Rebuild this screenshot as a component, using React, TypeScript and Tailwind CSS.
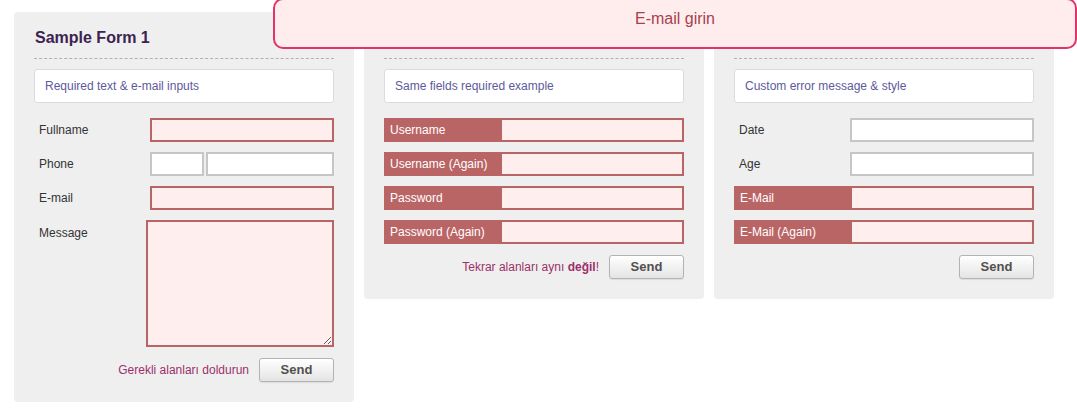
import { ReactNode } from "react";

const font = "font-['Liberation_Sans',Arial,sans-serif]";

const SendButton = () => (
  <button className="w-[75px] h-[24px] rounded-[3px] border border-[#b3b3b3] bg-gradient-to-b from-[#ffffff] to-[#e4e4e4] text-[13px] font-bold text-[#505050] shadow-[0_1px_1px_rgba(0,0,0,0.08)]">
    Send
  </button>
);

const Card = ({ title, info, children }: { title: string; info: string; children: ReactNode }) => (
  <div className="w-[340px] bg-[#efefef] rounded-[4px] px-5 pt-4 pb-5">
    <div className="text-[16px] leading-[20px] font-bold text-[#3c2352] pl-[1px] pb-[10px] border-b border-dashed border-[#b0b0b0]">
      {title}
    </div>
    <div className="mt-[10px] h-[34px] bg-white border border-[#dcdcdc] rounded-[3px] flex items-center pl-[10px] text-[12px] text-[#5d5a9c]">
      {info}
    </div>
    <div className="mt-[15px] flex flex-col gap-[10px]">{children}</div>
  </div>
);

const PinkRow = ({ label }: { label: string }) => (
  <div className="flex items-center">
    <div className="w-[116px] shrink-0 pl-[5px] text-[12px] text-[#333]">{label}</div>
    <input className="w-[184px] h-[24px] border-2 border-[#ba6565] bg-[#ffeeee] outline-none" />
  </div>
);

const GreyRow = ({ label }: { label: string }) => (
  <div className="flex items-center">
    <div className="w-[116px] shrink-0 pl-[5px] text-[12px] text-[#333]">{label}</div>
    <input className="w-[184px] h-[24px] border-2 border-[#c6c6c6] bg-white outline-none" />
  </div>
);

const BarRow = ({ label }: { label: string }) => (
  <div className="flex h-[24px] border-2 border-[#ba6565]">
    <div className="w-[116px] shrink-0 bg-[#ba6565] flex items-center pl-[4px] text-[12px] text-white whitespace-nowrap">
      {label}
    </div>
    <input className="flex-1 min-w-0 bg-[#ffeeee] outline-none" />
  </div>
);

export default function App() {
  return (
    <div className={`${font} relative w-[1077px] h-[412px] bg-white overflow-hidden`}>
      <div className="flex items-start gap-[10px] pl-[14px] pt-[12px]">
        <Card title="Sample Form 1" info="Required text & e-mail inputs">
          <PinkRow label="Fullname" />
          <div className="flex items-center">
            <div className="w-[116px] shrink-0 pl-[5px] text-[12px] text-[#333]">Phone</div>
            <div className="flex gap-[2px]">
              <input className="w-[54px] h-[24px] border-2 border-[#c6c6c6] bg-white outline-none" />
              <input className="w-[128px] h-[24px] border-2 border-[#c6c6c6] bg-white outline-none" />
            </div>
          </div>
          <PinkRow label="E-mail" />
          <div className="flex items-start">
            <div className="w-[112px] shrink-0 pl-[5px] pt-[4px] text-[12px] text-[#333]">Message</div>
            <textarea className="w-[188px] h-[127px] border-2 border-[#ba6565] bg-[#ffeeee] outline-none" />
          </div>
          <div className="flex items-center justify-end gap-[10px] mt-[1px]">
            <span className="text-[12px] text-[#9c2f6a]">Gerekli alanları doldurun</span>
            <SendButton />
          </div>
        </Card>

        <Card title="Sample Form 2" info="Same fields required example">
          <BarRow label="Username" />
          <BarRow label="Username (Again)" />
          <BarRow label="Password" />
          <BarRow label="Password (Again)" />
          <div className="flex items-center justify-end gap-[10px] mt-[1px]">
            <span className="text-[12px] text-[#9c2f6a]">
              Tekrar alanları aynı <b>değil</b>!
            </span>
            <SendButton />
          </div>
        </Card>

        <Card title="Sample Form 3" info="Custom error message & style">
          <GreyRow label="Date" />
          <GreyRow label="Age" />
          <BarRow label="E-Mail" />
          <BarRow label="E-Mail (Again)" />
          <div className="flex items-center justify-end mt-[1px]">
            <SendButton />
          </div>
        </Card>
      </div>

      <div className="absolute left-[273px] top-[-2px] w-[804px] h-[51px] border-2 border-[#df336a] rounded-[10px] bg-[#ffeded] flex justify-center pt-[8px]">
        <span className="text-[16px] leading-[22px] text-[#a8404d]">E-mail girin</span>
      </div>
    </div>
  );
}
